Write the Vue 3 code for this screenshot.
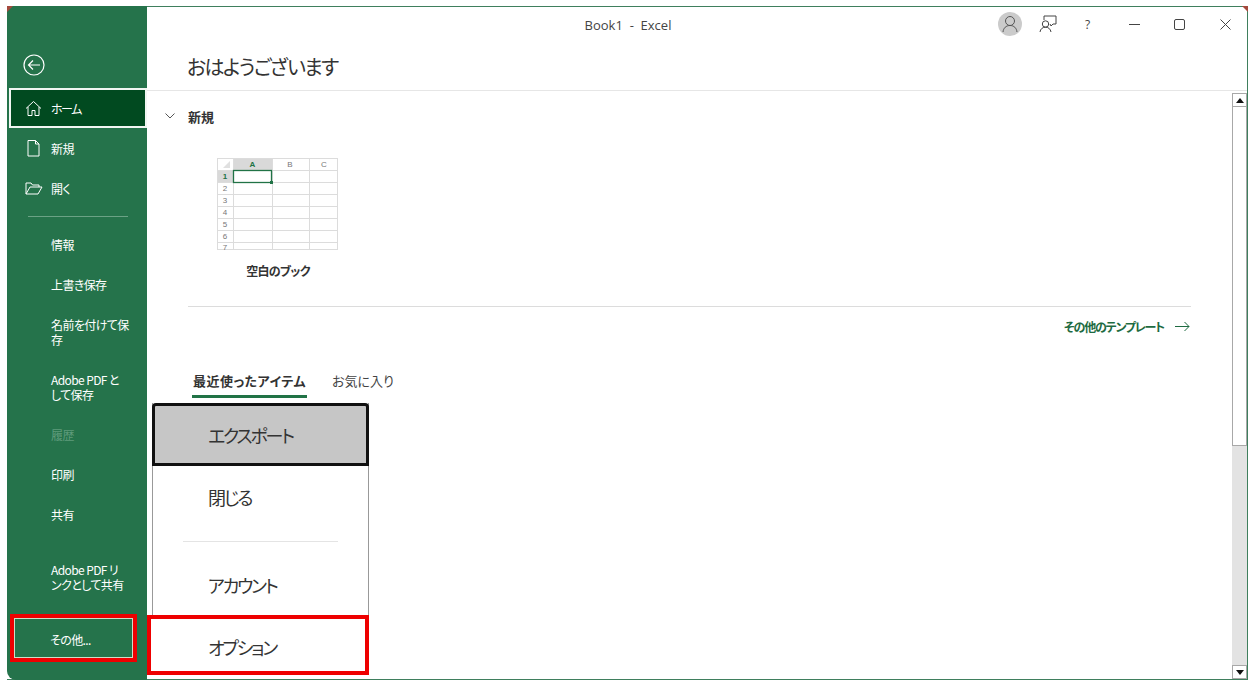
<script setup>
const primary = [
  { label: 'ホーム', icon: 'home', cls: 'is-active' },
  { label: '新規', icon: 'file' },
  { label: '開く', icon: 'folder' }
]
const secondary = [
  { label: '情報' },
  { label: '上書き保存' },
  { label: '名前を付けて保\n存', cls: 'is-tall' },
  { label: 'Adobe PDF と\nして保存', cls: 'is-tall' },
  { label: '履歴', cls: 'is-disabled' },
  { label: '印刷' },
  { label: '共有' },
  { label: 'Adobe PDF リ\nンクとして共有', cls: 'is-tall is-spaced' }
]
const colX = [0, 16, 55, 92, 120]
const rowY = [0, 12, 24, 36, 48, 60, 72, 84]
</script>

<template>
  <div class="page">
    <div class="window">
      <aside class="side">
        <div class="back">
          <svg width="24" height="24" viewBox="0 0 24 24" fill="none" stroke="#fff" stroke-width="1.2">
            <circle cx="12" cy="12" r="10" />
            <path d="M18 12H6.5M11 7.5 6.5 12l4.5 4.5" />
          </svg>
        </div>
        <div v-for="item in primary" :key="item.label" class="nav" :class="item.cls">
          <span class="nav-icon">
            <svg v-if="item.icon === 'home'" width="17" height="17" viewBox="0 0 17 17" fill="none" stroke="#fff" stroke-width="1">
              <path d="M1 8.500 8.500 1.500 16 8.500M3 7v8.500h4V10.500h3v5h4V7" />
            </svg>
            <svg v-else-if="item.icon === 'file'" width="17" height="17" viewBox="0 0 17 17" fill="none" stroke="#fff" stroke-width="1">
              <path d="M3 .5h7.500L14 4v12H3zM10.500.5V4H14" />
            </svg>
            <svg v-else width="18" height="17" viewBox="0 0 18 17" fill="none" stroke="#fff" stroke-width="1">
              <path d="M1 14V3h5l1.500 2H14v2M1 14h12l4-7H5z" />
            </svg>
          </span>
          <span class="nav-label">{{ item.label }}</span>
        </div>
        <div class="side-rule"></div>
        <div v-for="item in secondary" :key="item.label" class="nav" :class="item.cls">
          <span class="nav-icon"></span>
          <span class="nav-label">{{ item.label }}</span>
        </div>
        <div class="more-mark">
          <div class="more">その他...</div>
        </div>
      </aside>

      <main class="main">
        <header class="titlebar">
          <span class="doc-title">Book1&nbsp; -&nbsp; Excel</span>
          <div class="controls">
            <span class="avatar">
              <svg width="16" height="18" viewBox="0 0 16 18" fill="none" stroke="#555" stroke-width="1">
                <circle cx="8" cy="6" r="4.500" />
                <path d="M1 17c.5-4 3-6.500 7-6.500s6.500 2.500 7 6.500" />
              </svg>
            </span>
            <svg class="ctl-coach" width="18" height="18" viewBox="0 0 18 18" fill="none" stroke="#444" stroke-width="1">
              <path d="M5 5V1h12v8h-3l-2 2-1-2" />
              <circle cx="6.500" cy="9" r="3.200" />
              <path d="M1 17c.4-3 2.500-4.800 5.500-4.800s5 1.800 5.500 4.800" />
            </svg>
            <span class="ctl-help">?</span>
            <svg class="ctl-min" width="11" height="11" viewBox="0 0 11 11" stroke="#444" stroke-width="1"><path d="M0 5.500h11" /></svg>
            <svg class="ctl-max" width="11" height="11" viewBox="0 0 11 11" fill="none" stroke="#444" stroke-width="1"><rect x=".5" y=".5" width="10" height="10" rx="1.500" /></svg>
            <svg class="ctl-close" width="11" height="11" viewBox="0 0 11 11" stroke="#444" stroke-width="1"><path d="M.5.500l10 10M10.500.500l-10 10" /></svg>
          </div>
        </header>
        <div class="greeting">おはようございます</div>

        <div class="body">
          <div class="content">
            <div class="section-head">
              <svg width="10" height="6" viewBox="0 0 10 6" fill="none" stroke="#555" stroke-width="1"><path d="M.5.500 5 5 9.500.500" /></svg>
              <span>新規</span>
            </div>
            <div class="template">
              <svg class="sheet" width="122" height="93" viewBox="0 0 122 93" font-family="Liberation Sans, sans-serif" font-size="8" fill="#777" text-anchor="middle">
                <rect x="0" y="0" width="121" height="92" fill="#fff" />
                <rect x="16" y="0" width="39" height="12" fill="#d9d9d9" />
                <rect x="0" y="12" width="16" height="12" fill="#d9d9d9" />
                <path d="M13 3v7H6z" fill="#e0e0e0" />
                <g stroke="#dcdcdc" stroke-width="1">
                  <line v-for="x in colX" :key="'c' + x" :x1="x + .5" y1="0" :x2="x + .5" y2="92" />
                  <line v-for="y in rowY" :key="'r' + y" x1="0" :y1="y + .5" x2="121" :y2="y + .5" />
                  <line x1="0" y1="91.500" x2="121" y2="91.500" />
                </g>
                <rect x="16.500" y="12.500" width="38" height="12" fill="none" stroke="#217346" stroke-width="1.300" />
                <rect x="53" y="23" width="3" height="3" fill="#217346" />
                <text x="35.500" y="9" fill="#217346" font-weight="700">A</text>
                <text x="73" y="9">B</text>
                <text x="107" y="9">C</text>
                <text x="8" y="21" fill="#217346" font-weight="700">1</text>
                <text x="8" y="33">2</text>
                <text x="8" y="45">3</text>
                <text x="8" y="57">4</text>
                <text x="8" y="69">5</text>
                <text x="8" y="81">6</text>
                <text x="8" y="92">7</text>
              </svg>
              <div class="template-name">空白のブック</div>
            </div>
            <div class="rule"></div>
            <div class="more-templates">
              <span>その他のテンプレート</span>
              <svg width="15" height="11" viewBox="0 0 15 11" fill="none" stroke="#1e6b41" stroke-width="1"><path d="M0 5.500h14M9.500 1l4.500 4.500L9.500 10" /></svg>
            </div>
            <div class="tabs">
              <span class="tab is-current">最近使ったアイテム</span>
              <span class="tab">お気に入り</span>
            </div>
          </div>
          <div class="scrollbar">
            <div class="sb-btn">
              <svg width="8" height="5" viewBox="0 0 8 5"><path d="M4 0l4 5H0z" fill="#111" /></svg>
            </div>
            <div class="sb-thumb"></div>
            <div class="sb-track"></div>
            <div class="sb-btn">
              <svg width="8" height="5" viewBox="0 0 8 5"><path d="M0 0h8L4 5z" fill="#111" /></svg>
            </div>
          </div>
        </div>
      </main>

      <div class="menu">
        <div class="menu-item is-selected">エクスポート</div>
        <div class="menu-item">閉じる</div>
        <div class="menu-rule"></div>
        <div class="menu-item">アカウント</div>
        <div class="menu-item is-marked">オプション</div>
      </div>

      <span class="corner corner-l"></span>
      <span class="corner corner-r"></span>
    </div>
  </div>
</template>

<style>
html, body { margin: 0; background: #fff; }
</style>

<style scoped>
.page {
  width: 1256px;
  height: 688px;
  padding: 6px 8px 8px 7px;
  box-sizing: border-box;
  font-family: "Noto Sans CJK JP", "Noto Sans", sans-serif;
  font-feature-settings: "palt";
  overflow: hidden;
}
.window {
  position: relative;
  display: flex;
  height: 100%;
  box-sizing: border-box;
  border: 1px solid #3f7f5d;
  border-left: 0;
  background: #fff;
}
.side {
  width: 140px;
  flex: none;
  margin: -1px 0 -1px 0;
  background: #25734b;
  color: #fff;
  border-bottom-left-radius: 9px;
  display: flex;
  flex-direction: column;
}
.back {
  height: 82px;
  box-sizing: border-box;
  padding: 47px 0 0 15px;
}
.nav {
  height: 40px;
  flex: none;
  display: flex;
  align-items: center;
  box-sizing: border-box;
  font-size: 12px;
  line-height: 15px;
  letter-spacing: -0.6px;
  color: #fff;
}
.nav-icon {
  width: 44px;
  flex: none;
  box-sizing: border-box;
  padding-left: 18px;
  display: flex;
  align-items: center;
}
.nav-label { white-space: pre-line; }
.is-active {
  margin-left: 2px;
  background: #014a20;
  border: 2px solid #f1f6f2;
  letter-spacing: -1.500px;
}
.is-active .nav-icon {
  width: 40px;
  padding-left: 14px;
}
.is-tall { height: 55px; }
.is-spaced { margin-top: 15px; }
.is-disabled { color: #5f9b7b; }
.side-rule {
  height: 1px;
  flex: none;
  margin: 8px 19px 7px 21px;
  background: #6ba285;
}
.more-mark {
  margin: 10px 0 0 3px;
  width: 127px;
  height: 48px;
  box-sizing: border-box;
  border: 4px solid #ee0000;
}
.more {
  height: 100%;
  box-sizing: border-box;
  border: 1px solid #cfdcc6;
  padding: 2px 0 0 35px;
  display: flex;
  align-items: center;
  font-size: 12px;
  letter-spacing: -0.6px;
}
.main {
  flex: 1;
  min-width: 0;
  display: flex;
  flex-direction: column;
  color: #333;
}
.titlebar {
  height: 35px;
  flex: none;
  position: relative;
  display: flex;
  justify-content: center;
  align-items: center;
  box-sizing: border-box;
}
.doc-title {
  font-family: "Open Sans", sans-serif;
  font-size: 13px;
  color: #444;
  margin-right: 138px;
}
.controls {
  position: absolute;
  right: 16px;
  top: 5px;
  display: flex;
  align-items: center;
  height: 24px;
}
.avatar {
  width: 24px;
  height: 24px;
  border-radius: 50%;
  background: #cbcbcb;
  display: flex;
  align-items: center;
  justify-content: center;
}
.ctl-coach { margin-left: 17px; }
.ctl-help {
  margin-left: 28px;
  width: 10px;
  font-family: "Open Sans", sans-serif;
  font-size: 12px;
  color: #444;
}
.ctl-min { margin-left: 34px; }
.ctl-max { margin-left: 34px; }
.ctl-close { margin-left: 35px; }
.greeting {
  height: 49px;
  flex: none;
  box-sizing: border-box;
  padding: 10px 0 0 40px;
  border-bottom: 1px solid #e6e6e6;
  font-size: 20px;
  line-height: 30px;
  letter-spacing: -1.600px;
  color: #333;
}
.body {
  flex: 1;
  min-height: 0;
  display: flex;
}
.content {
  flex: 1;
  min-width: 0;
  padding: 0 41px 0 41px;
}
.section-head {
  display: flex;
  align-items: center;
  height: 20px;
  margin-top: 15px;
  margin-left: -23px;
  gap: 13px;
  font-size: 13px;
  font-weight: 700;
  color: #333;
}
.template {
  margin: 32px 0 0 29px;
  width: 122px;
}
.sheet { display: block; }
.template-name {
  margin-top: 11px;
  text-align: center;
  font-size: 12px;
  line-height: 18px;
  letter-spacing: -0.7px;
  font-weight: 700;
  color: #333;
}
.rule {
  margin-top: 26px;
  height: 1px;
  background: #dcdcdc;
}
.more-templates {
  display: flex;
  justify-content: flex-end;
  align-items: center;
  gap: 11px;
  margin-top: 9px;
  height: 20px;
  font-size: 12px;
  letter-spacing: -1.200px;
  font-weight: 700;
  color: #1e6b41;
}
.more-templates svg { margin-right: 1px; }
.tabs {
  display: flex;
  gap: 25px;
  margin: 35px 0 0 4px;
  font-size: 13px;
  line-height: 20px;
  color: #444;
}
.tab {
  height: 27px;
  box-sizing: border-box;
  white-space: nowrap;
}
.is-current {
  width: 115px;
  border-bottom: 3px solid #217346;
  font-weight: 700;
  letter-spacing: 0.5px;
  color: #333;
  text-align: center;
}
.scrollbar {
  width: 15px;
  flex: none;
  margin: 2px 0 0 0;
  display: flex;
  flex-direction: column;
}
.sb-btn {
  height: 14px;
  flex: none;
  box-sizing: border-box;
  border: 1px solid #a8a8a8;
  background: #fff;
  display: flex;
  align-items: center;
  justify-content: center;
}
.sb-thumb {
  height: 339px;
  flex: none;
  box-sizing: border-box;
  border: 1px solid #a8a8a8;
  border-top: 0;
  background: #fff;
}
.sb-track {
  flex: 1;
  background: #e3e3e3;
}
.menu {
  position: absolute;
  left: 145px;
  top: 396px;
  width: 217px;
  box-sizing: border-box;
  background: #fff;
  border-left: 1px solid #999;
  border-right: 1px solid #999;
  font-size: 18px;
  letter-spacing: -2.200px;
  color: #333;
}
.menu-item {
  height: 62px;
  box-sizing: border-box;
  padding-left: 55px;
  display: flex;
  align-items: center;
}
.is-selected {
  margin: 0 -1px;
  height: 63px;
  padding-left: 53px;
  background: #c6c6c6;
  border: 3px solid #111;
  border-radius: 4px 4px 0 0;
}
.menu-rule {
  height: 1px;
  margin: 13px 30px 12px 30px;
  background: #e4e4e4;
}
.is-marked {
  margin: -1px -1px 0 -6px;
  height: 60px;
  padding: 3px 0 0 57px;
  border: 4px solid #ee0000;
  background: #fff;
}
.corner {
  position: absolute;
  top: -1px;
  width: 0;
  height: 0;
  border-style: solid;
}
.corner-l {
  left: 0;
  border-width: 6px 6px 0 0;
  border-color: #a4493d transparent transparent transparent;
}
.corner-r {
  right: -1px;
  border-width: 0 6px 6px 0;
  border-color: transparent #a4493d transparent transparent;
}
</style>
